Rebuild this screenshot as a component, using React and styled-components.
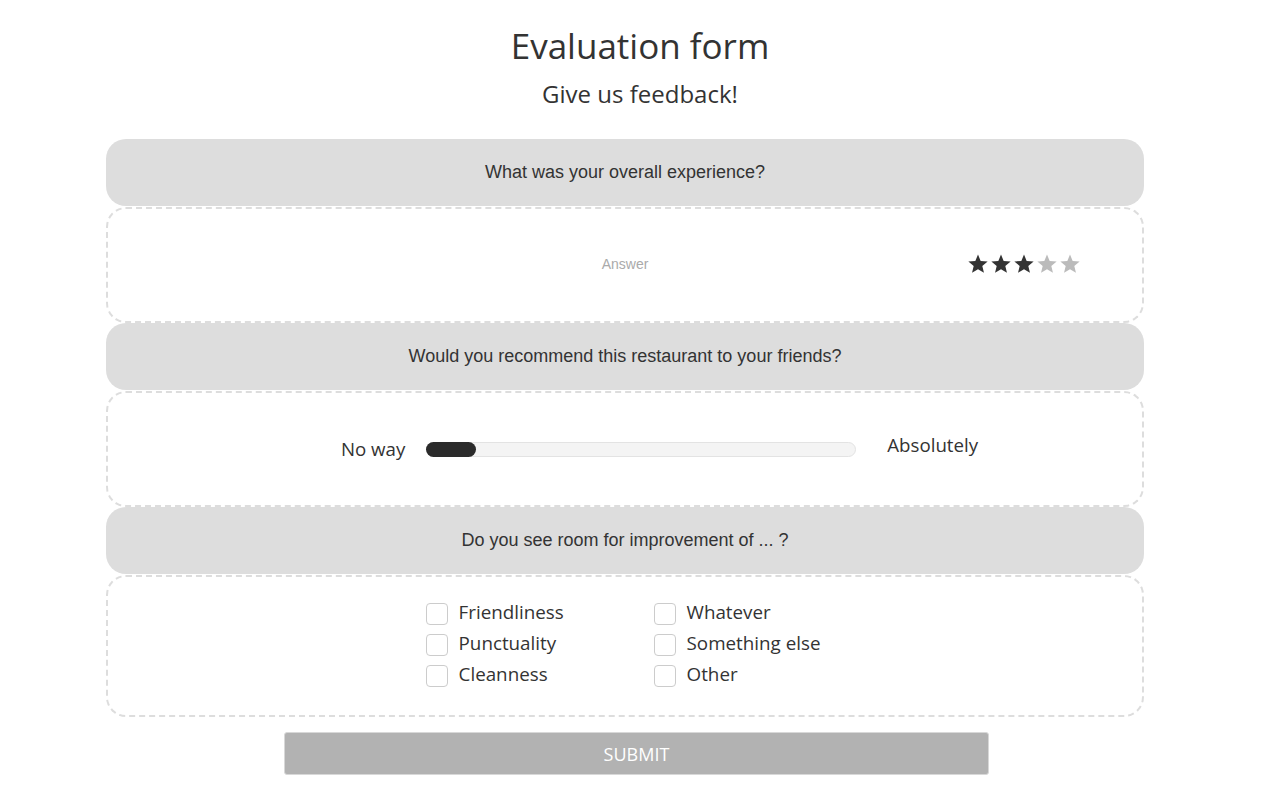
import React from "react";
import styled, { createGlobalStyle } from "styled-components";

const Global = createGlobalStyle`
  html, body { margin: 0; padding: 0; background: #fff; }
  body { font-family: "Open Sans", "Liberation Sans", sans-serif; color: #333; }
`;

const Page = styled.div`
  width: 1280px;
  padding-top: 24px;
`;

const Title = styled.h1`
  margin: 0;
  text-align: center;
  font-family: "Open Sans", sans-serif;
  font-weight: 400;
  font-size: 35px;
  line-height: 43px;
  color: #333;
`;

const Subtitle = styled.h2`
  margin: 12px 0 0;
  text-align: center;
  font-family: "Open Sans", sans-serif;
  font-weight: 400;
  font-size: 24px;
  line-height: 29px;
  color: #333;
`;

const Form = styled.form`
  width: 1038px;
  margin: 31px 0 0 106px;
  display: flex;
  flex-direction: column;
`;

const Question = styled.div`
  height: 67px;
  background: #dddddd;
  border-radius: 20px;
  display: flex;
  align-items: center;
  justify-content: center;
  font-family: "Liberation Sans", Arial, sans-serif;
  font-size: 18px;
  color: #333;
`;

const AnswerBox = styled.div`
  box-sizing: border-box;
  height: ${(p) => p.$h}px;
  border: 2px dashed #dddddd;
  border-radius: 20px;
  margin-top: 1px;
  display: flex;
  align-items: center;
`;

const RatingRow = styled.div`
  width: 100%;
  display: grid;
  grid-template-columns: 1fr auto 1fr;
  align-items: center;
  padding: 0 61px 2px 61px;
  box-sizing: border-box;
`;

const Placeholder = styled.span`
  font-family: "Liberation Sans", Arial, sans-serif;
  font-size: 14px;
  color: #aaa;
  grid-column: 2;
`;

const Stars = styled.div`
  justify-self: end;
  display: flex;
  gap: 1px;
`;

const Star = ({ on }) => (
  <svg width="22" height="22" viewBox="0 0 24 24">
    <polygon
      points="12,1.5 14.9,8.6 22.5,9.2 16.7,14.1 18.5,21.6 12,17.6 5.5,21.6 7.3,14.1 1.5,9.2 9.1,8.6"
      fill={on ? "#333" : "#bbb"}
    />
  </svg>
);

const SliderRow = styled.div`
  width: 100%;
  display: flex;
  align-items: center;
  justify-content: center;
  padding-left: 69px;
  box-sizing: border-box;
`;

const SliderLabel = styled.span`
  font-family: "Open Sans", sans-serif;
  font-size: 18.7px;
  color: #333;
  position: relative;
  top: ${(p) => p.$dy || 0}px;
`;

const Track = styled.div`
  box-sizing: border-box;
  width: 430px;
  height: 15px;
  margin: 0 31px 0 21px;
  background: #f4f4f4;
  border: 1px solid #e3e3e3;
  border-radius: 8px;
  position: relative;
`;

const Thumb = styled.div`
  position: absolute;
  left: -1px;
  top: -1px;
  height: 15px;
  border-radius: 8px;
  background: #2b2b2b;
`;

const Checks = styled.div`
  margin: 0 auto;
  display: grid;
  grid-template-columns: 228px auto;
  row-gap: 7px;
  position: relative;
  left: -2px;
  top: -3px;
`;

const CheckItem = styled.label`
  display: flex;
  align-items: center;
  height: 24px;
  font-family: "Open Sans", sans-serif;
  font-size: 18.8px;
  color: #333;
`;

const Box = styled.span`
  box-sizing: border-box;
  width: 22px;
  height: 22px;
  border: 1px solid #cccccc;
  border-radius: 4px;
  margin-right: 11px;
  margin-top: 3px;
  background: #fff;
`;

const Submit = styled.button`
  margin: 15px 0 0 178px;
  width: 705px;
  height: 43px;
  background: #b2b2b2;
  border: 1px solid #d8d8d8;
  border-radius: 3px;
  color: #fff;
  font-family: "Open Sans", sans-serif;
  font-size: 18px;
  text-transform: uppercase;
`;

const left = ["Friendliness", "Punctuality", "Cleanness"];
const right = ["Whatever", "Something else", "Other"];

export default function App() {
  const items = [];
  for (let i = 0; i < 3; i++) {
    items.push(
      <CheckItem key={"l" + i}>
        <Box />
        {left[i]}
      </CheckItem>
    );
    items.push(
      <CheckItem key={"r" + i}>
        <Box />
        {right[i]}
      </CheckItem>
    );
  }
  return (
    <>
      <Global />
      <Page>
        <Title>Evaluation form</Title>
        <Subtitle>Give us feedback!</Subtitle>
        <Form onSubmit={(e) => e.preventDefault()}>
          <Question>What was your overall experience?</Question>
          <AnswerBox $h={116}>
            <RatingRow>
              <Placeholder>Answer</Placeholder>
              <Stars>
                {[1, 2, 3, 4, 5].map((n) => (
                  <Star key={n} on={n <= 3} />
                ))}
              </Stars>
            </RatingRow>
          </AnswerBox>
          <Question>Would you recommend this restaurant to your friends?</Question>
          <AnswerBox $h={116}>
            <SliderRow>
              <SliderLabel $dy={-1}>No way</SliderLabel>
              <Track>
                <Thumb style={{ width: "50px" }} />
              </Track>
              <SliderLabel $dy={-5}>Absolutely</SliderLabel>
            </SliderRow>
          </AnswerBox>
          <Question>Do you see room for improvement of ... ?</Question>
          <AnswerBox $h={142}>
            <Checks>{items}</Checks>
          </AnswerBox>
          <Submit type="submit">Submit</Submit>
        </Form>
      </Page>
    </>
  );
}
